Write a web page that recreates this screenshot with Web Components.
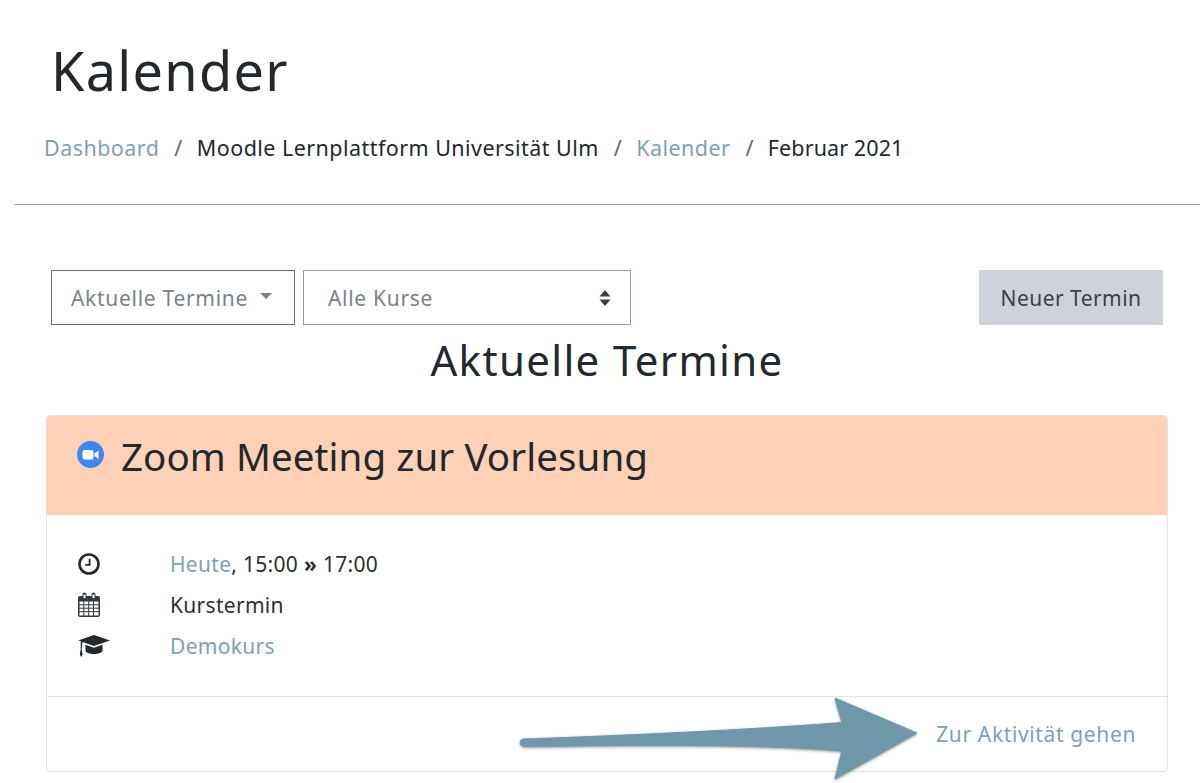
<!DOCTYPE html>
<html lang="de">
<head>
<meta charset="utf-8">
<title>Kalender</title>
<style>
  html, body { margin: 0; background: #fff; }
  body {
    position: relative;
    height: 783px;
    overflow: hidden;
    font-family: "Noto Sans", "Open Sans", sans-serif;
    color: #23282d;
    --link: #7f9fb5;
  }
</style>
</head>
<body>
<page-head>
  <bread-crumb href>Dashboard</bread-crumb>
  <bread-crumb>Moodle Lernplattform Universität Ulm</bread-crumb>
  <bread-crumb href>Kalender</bread-crumb>
  <bread-crumb>Februar 2021</bread-crumb>
</page-head>
<filter-bar></filter-bar>
<event-card></event-card>
<hint-arrow></hint-arrow>

<script>
  customElements.define("bread-crumb", class extends HTMLElement {
    connectedCallback() {
      this.attachShadow({ mode: "open" });
      this.shadowRoot.innerHTML = `
        <style>
          :host { display: inline-flex; white-space: nowrap; }
          :host(:not(:last-child))::after { content: "/"; color: #666; padding: 0 14px 0 15px; }
          :host(:last-child) { letter-spacing: 0.1px; }
          :host([href]) { color: var(--link); }
        </style>
        <slot></slot>`;
    }
  });

  customElements.define("page-head", class extends HTMLElement {
    connectedCallback() {
      this.attachShadow({ mode: "open" });
      this.shadowRoot.innerHTML = `
        <style>
          :host { display: block; margin-left: 14px; height: 205px; border-bottom: 1px solid #8ba3b2; box-sizing: border-box; }
          h1 { margin: 0; padding: 34px 0 0 37px; font-size: 54px; line-height: 72px; font-weight: 400; letter-spacing: 1.3px; }
          nav { display: flex; padding: 26px 0 0 30px; font-size: 21.5px; line-height: 32px; letter-spacing: 0.45px; }
        </style>
        <h1>Kalender</h1>
        <nav><slot></slot></nav>`;
    }
  });

  customElements.define("filter-bar", class extends HTMLElement {
    connectedCallback() {
      this.attachShadow({ mode: "open" });
      this.shadowRoot.innerHTML = `
        <style>
          :host { display: block; padding: 65px 37px 0 51px; }
          .row { display: flex; gap: 8px; height: 55px; font-size: 21px; letter-spacing: 0.7px; }
          .box { display: flex; align-items: center; box-sizing: border-box; background: #fff; color: #7a828a; }
          .drop { width: 244px; padding: 0 19px; border: 1.5px solid #5f6f7e; gap: 12px; }
          .drop i { border: 6px solid transparent; border-top-color: #7a828a; border-bottom: 0; margin-top: -3px; }
          .select { width: 328px; padding: 0 19px 0 24px; border: 1.5px solid #8f9ba8; justify-content: space-between; }
          .new { margin-left: auto; width: 184px; justify-content: center; background: #ced3db; color: #3a4046; letter-spacing: 0.45px; }
          h2 { margin: 0; text-align: center; padding: 5px 0 0; font-size: 42px; line-height: 59px; font-weight: 400; letter-spacing: 1.35px; }
        </style>
        <div class="row">
          <div class="box drop"><span>Aktuelle Termine</span><i></i></div>
          <div class="box select"><span>Alle Kurse</span>
            <svg width="12" height="18" viewBox="0 0 12 18"><path fill="#3a4046" d="M6 1 11.5 7.5H.5zM6 17 .5 10.5h11z"/></svg>
          </div>
          <div class="box new">Neuer Termin</div>
        </div>
        <h2>Aktuelle Termine</h2>`;
    }
  });

  customElements.define("event-card", class extends HTMLElement {
    connectedCallback() {
      this.attachShadow({ mode: "open" });
      this.shadowRoot.innerHTML = `
        <style>
          :host { display: block; margin: 26px 32px 0 46px; height: 357px; box-sizing: border-box; border: 1px solid #e1e3e5; border-radius: 4px; overflow: hidden; }
          header { display: flex; align-items: flex-start; gap: 17px; height: 99px; box-sizing: border-box; padding: 22px 0 0 30px; background: #ffd2b8; font-size: 38.5px; line-height: 36px; letter-spacing: 0.08px; }
          header svg { margin-top: 3px; flex: none; }
          .body { display: grid; grid-template-columns: 93px 1fr; grid-auto-rows: 41px; align-items: center; height: 182px; box-sizing: border-box; padding: 28px 0 0 30px; font-size: 21px; letter-spacing: 0.3px; border-bottom: 1px solid #e1e3e5; color: #2b3035; }
          a { color: var(--link); }
          footer { display: flex; justify-content: flex-end; align-items: center; height: 74px; padding-right: 31px; font-size: 21px; letter-spacing: 0.63px; color: var(--link); }
          svg { display: block; }
        </style>
        <header>
          <svg width="27" height="27" viewBox="0 0 27 27">
            <circle cx="13.5" cy="13.5" r="13.5" fill="#3f86f5"/>
            <rect x="5.5" y="9" width="11" height="9.5" rx="2" fill="#fff"/>
            <path fill="#fff" d="M17.5 12.5 21.5 9.5V18l-4-3z"/>
          </svg>
          <span>Zoom Meeting zur Vorlesung</span>
        </header>
        <div class="body">
          <svg width="24" height="24" viewBox="0 0 24 24">
            <circle cx="12" cy="12" r="9.500" fill="none" stroke="#23282d" stroke-width="2.600"/>
            <path d="M12.600 6.800v6H8.200" fill="none" stroke="#23282d" stroke-width="1.800"/>
          </svg>
          <span><a>Heute</a>, 15:00 <b>»</b> 17:00</span>
          <svg width="24" height="26" viewBox="0 0 24 26">
            <path fill="#33383d" fill-rule="evenodd" d="M3 4h2.500V2.600a2 2 0 0 1 4 0V4h5V2.600a2 2 0 0 1 4 0V4H21a2 2 0 0 1 2 2v17a2 2 0 0 1-2 2H3a2 2 0 0 1-2-2V6a2 2 0 0 1 2-2zM7.500 3v3.500h0M2.500 9.500v14h19v-14z"/>
            <path fill="#fff" d="M6.500 2.500h2v3.500h-2zM15.500 2.500h2v3.500h-2z"/>
            <path stroke="#33383d" stroke-width="1" d="M2 12.800h20M2 16.200h20M2 19.700h20M6.800 9v15M11.700 9v15M16.500 9v15"/>
          </svg>
          <span>Kurstermin</span>
          <svg width="34" height="24" viewBox="0 0 34 24">
            <path fill="#23282d" d="M17 1 33 6.500 17 12 5.500 8 4.600 15.200l1 5.300-1.400 2.500-1.400-2.500.9-5.300V7L1 6.500z"/>
            <path fill="#23282d" d="M8.500 10.800 17 13.700l8.500-2.900v5.700c0 2-3.800 3.500-8.500 3.500s-8.500-1.500-8.500-3.500z"/>
          </svg>
          <a>Demokurs</a>
        </div>
        <footer>Zur Aktivität gehen</footer>`;
    }
  });

  // the arrow is a markup on top of the screenshot, so it sits on the page freely
  customElements.define("hint-arrow", class extends HTMLElement {
    connectedCallback() {
      this.attachShadow({ mode: "open" });
      this.shadowRoot.innerHTML = `
        <style>
          :host { position: absolute; left: 0; top: 0; width: 1200px; height: 783px; pointer-events: none; }
          svg { display: block; filter: drop-shadow(0 1.5px 1.5px rgba(60, 60, 50, 0.55)); }
        </style>
        <svg width="1200" height="783" viewBox="0 0 1200 783">
          <path fill="#6f98ab" stroke="#6f98ab" stroke-linejoin="round" d="M835 698 917 733 835 779 842 751C760 744 640 745 524 746.500 519 746 519 739 524 739 640 735 760 729 842 722.500z"/>
        </svg>`;
    }
  });
</script>
</body>
</html>
